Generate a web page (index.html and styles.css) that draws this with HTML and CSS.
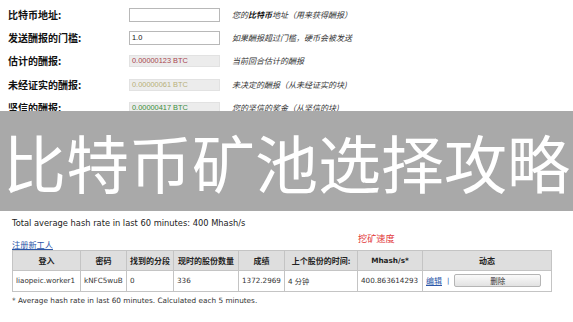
FILE: index.html
```html
<!DOCTYPE html>
<html lang="zh-CN">
<head>
<meta charset="utf-8">
<title>比特币矿池选择攻略</title>
<link rel="stylesheet" href="styles.css">
</head>
<body>
<div class="page">
  <div class="form">
    <div class="label">比特币地址:</div>
    <div class="field"><span class="input"></span></div>
    <div class="desc">您的<b>比特币</b>地址（用来获得酬报）</div>

    <div class="label">发送酬报的门槛:</div>
    <div class="field"><span class="input">1.0</span></div>
    <div class="desc">如果酬报超过门槛，硬币会被发送</div>

    <div class="label">估计的酬报:</div>
    <div class="field"><span class="input disabled red">0.00000123 BTC</span></div>
    <div class="desc">当前回合估计的酬报</div>

    <div class="label">未经证实的酬报:</div>
    <div class="field"><span class="input disabled khaki">0.00000061 BTC</span></div>
    <div class="desc">未决定的酬报（从未经证实的块)</div>

    <div class="label">坚信的酬报:</div>
    <div class="field"><span class="input disabled green">0.00000417 BTC</span></div>
    <div class="desc">您的坚信的奖金（从坚信的块)</div>
  </div>

  <div class="stats">
    <p class="total">Total average hash rate in last 60 minutes: 400 Mhash/s</p>
    <div class="toolbar">
      <a class="link" href="#">注册新工人</a>
      <span class="note">挖矿速度</span>
    </div>
    <table class="workers">
      <colgroup>
        <col class="c1"><col class="c2"><col class="c3"><col class="c4">
        <col class="c5"><col class="c6"><col class="c7"><col class="c8">
      </colgroup>
      <thead>
        <tr>
          <th>登入</th><th>密码</th><th>找到的分段</th><th>现时的股份数量</th>
          <th>成绩</th><th>上个股份的时间:</th><th class="latin">Mhash/s*</th><th>动态</th>
        </tr>
      </thead>
      <tbody>
        <tr>
          <td>liaopeic.worker1</td><td>kNFC5wuB</td><td>0</td><td>336</td>
          <td>1372.2969</td><td>4 分钟</td><td>400.863614293</td>
          <td><div class="actions"><a class="link" href="#">编辑</a><span class="sep">|</span><span class="btn">删除</span></div></td>
        </tr>
      </tbody>
    </table>
    <p class="foot">* Average hash rate in last 60 minutes. Calculated each 5 minutes.</p>
  </div>

  <div class="banner">比特币矿池选择攻略</div>
</div>
</body>
</html>
```
FILE: styles.css
```css
html, body {
  margin: 0;
  padding: 0;
  background: #fff;
}
.page {
  position: relative;
  width: 573px;
  height: 322px;
  overflow: hidden;
  font-family: "DejaVu Sans", "Noto Sans CJK SC", sans-serif;
  color: #222;
}
.form {
  display: grid;
  grid-template-columns: 121px 103px auto;
  grid-auto-rows: 23.4px;
  align-items: center;
  padding: 3px 0 0 8px;
}
.label {
  font-family: "Noto Sans CJK SC", sans-serif;
  font-weight: 700;
  font-size: 10px;
  color: #111;
  line-height: 12px;
}
.field {
  display: flex;
  align-items: center;
}
.input {
  box-sizing: border-box;
  width: 91px;
  height: 14px;
  border: 1px solid #b8b8b8;
  background: #fff;
  font-family: "Liberation Sans", Arial, sans-serif;
  font-size: 7.4px;
  line-height: 12px;
  padding-left: 2px;
  color: #111;
}
.input.disabled {
  background: #ececec;
  border-color: #e2e2e2;
  height: 12px;
  line-height: 10px;
}
.red { color: #a8454f; }
.khaki { color: #b8b078; }
.green { color: #3d8c3d; }
.desc {
  font-family: "Noto Sans CJK SC", sans-serif;
  font-style: italic;
  font-size: 8px;
  color: #333;
  line-height: 10px;
}
.desc b { font-weight: 700; color: #111; }

.stats {
  padding: 0 0 0 12px;
  margin-top: 98px;
}
.total {
  margin: 0;
  font-size: 8.3px;
  line-height: 10px;
  color: #222;
}
.toolbar {
  display: flex;
  align-items: flex-end;
  width: 539px;
  height: 15px;
  margin-top: 6px;
  padding-bottom: 1px;
}
.link {
  font-family: "Noto Sans CJK SC", sans-serif;
  font-size: 8.2px;
  line-height: 10px;
  color: #2c56a8;
  text-decoration: underline;
}
.note {
  font-family: "Noto Sans CJK SC", sans-serif;
  font-size: 9.2px;
  line-height: 11px;
  color: #e2383a;
  margin-left: 305px;
  margin-bottom: 5px;
}
.workers {
  border-collapse: collapse;
  table-layout: fixed;
  width: 539px;
  font-size: 7.2px;
}
.c1 { width: 68px; }
.c2 { width: 46px; }
.c3 { width: 47px; }
.c4 { width: 65px; }
.c5 { width: 46px; }
.c6 { width: 73px; }
.c7 { width: 65px; }
.c8 { width: 129px; }
.workers th, .workers td {
  border: 1px solid #c4c4c4;
  padding: 0 0 0 3px;
  white-space: nowrap;
  overflow: hidden;
}
.workers th {
  height: 19px;
  background: #dedede;
  font-family: "Noto Sans CJK SC", sans-serif;
  font-weight: 700;
  font-size: 8px;
  text-align: center;
  padding: 0;
  color: #222;
}
.workers th.latin {
  font-family: "DejaVu Sans", sans-serif;
  font-size: 7.3px;
}
.workers td {
  height: 20px;
  color: #333;
  text-align: left;
}
.actions {
  display: flex;
  align-items: center;
}
.actions .link { font-size: 8px; }
.sep {
  color: #2c56a8;
  font-size: 7px;
  margin: 0 5px 0 5px;
}
.btn {
  display: inline-flex;
  align-items: center;
  justify-content: center;
  box-sizing: border-box;
  width: 87px;
  height: 13px;
  border: 1px solid #b5b5b5;
  border-radius: 2px;
  background: linear-gradient(#fafafa, #e2e2e2);
  font-family: "Noto Sans CJK SC", sans-serif;
  font-size: 7.5px;
  color: #333;
}
.foot {
  margin: 4px 0 0 0;
  font-size: 7.3px;
  line-height: 10px;
  color: #333;
}
.banner {
  position: absolute;
  left: 0;
  top: 111px;
  width: 573px;
  height: 100px;
  background: #a9a9a9;
  color: #fff;
  font-family: "Noto Sans CJK SC", sans-serif;
  font-size: 63px;
  line-height: 100px;
  text-align: center;
  white-space: nowrap;
}
```
